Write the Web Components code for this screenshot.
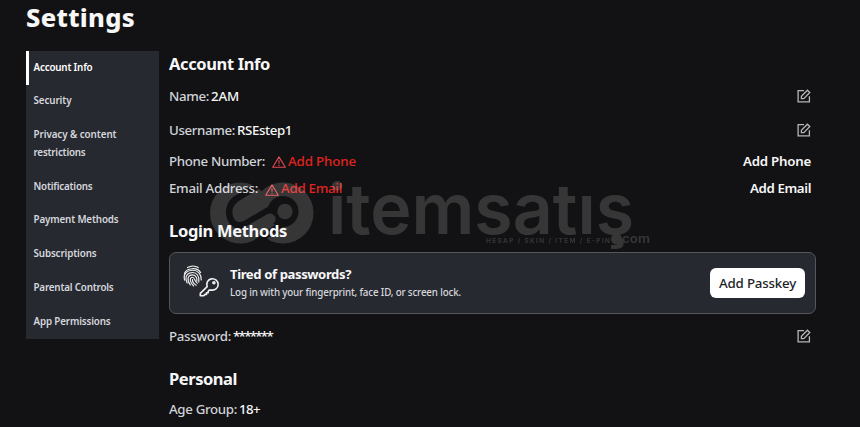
<!DOCTYPE html>
<html lang="en">
<head>
<meta charset="utf-8">
<title>Settings</title>
<style>
    body {
        margin: 0;
        height: 427px;
        overflow: hidden;
        background: #121214;
        color: #f7f7f8;
        font-family: "Noto Sans", "Open Sans", sans-serif;
    }
</style>
</head>
<body>
<settings-page></settings-page>

<script>
// Text that adjusts its letter spacing until it fills the given width
class FitText extends HTMLElement {
    constructor() {
        super();
        this.attachShadow({ mode: 'open' });
        this.shadowRoot.innerHTML = `<style>
            :host { display: block; white-space: nowrap; }
            span { display: inline-block; }
        </style><span><slot></slot></span>`;
    }

    connectedCallback() {
        const span = this.shadowRoot.querySelector('span');
        const width = Number(this.getAttribute('width'));
        const spacing = (width - span.getBoundingClientRect().width) / this.textContent.length;
        span.style.letterSpacing = spacing.toFixed(3) + 'px';
        this.style.width = width + 'px';
    }
}

class EditIcon extends HTMLElement {
    constructor() {
        super();
        this.attachShadow({ mode: 'open' });
        this.shadowRoot.innerHTML = `
            <style>
                :host { display: block; width: 14px; height: 14px; }
                svg { display: block; }
            </style>
            <svg width="14" height="14" viewBox="0 0 14 14" fill="none" stroke="#b4b5b8" stroke-width="1.3">
                <path d="M7 1.6H1.1V12.9H12.4V7.2"/>
                <path d="M4.4 9.6V7.3L10.4 1.2L12.8 3.5L6.8 9.6Z"/>
            </svg>
        `;
    }
}

class WarningIcon extends HTMLElement {
    constructor() {
        super();
        this.attachShadow({ mode: 'open' });
        this.shadowRoot.innerHTML = `
            <style>
                :host { display: block; width: 14px; height: 12px; }
                svg { display: block; }
            </style>
            <svg width="14" height="12" viewBox="0 0 14 12" fill="none" stroke="#e5484d" stroke-width="1.1">
                <path d="M7 .9L13.3 11.3H.7Z" stroke-linejoin="round"/>
                <path d="M7 4.2V7.8M7 8.8V10"/>
            </svg>
        `;
    }
}

class PasskeyIcon extends HTMLElement {
    constructor() {
        super();
        this.attachShadow({ mode: 'open' });
        this.shadowRoot.innerHTML = `
            <style>
                :host { display: block; width: 38px; height: 34px; }
                svg { display: block; }
            </style>
            <svg width="38" height="34" viewBox="0 0 38 34" fill="none" stroke="#f2f2f3" stroke-linecap="round">
                <g stroke-width="1.15">
                    <path d="M4.6 2.6C7.6 .7 12.2 .7 15.2 2.6"/>
                    <path d="M1.4 8.4C3.6 3.3 13.8 1.4 17.6 7.6"/>
                    <path d="M1.6 15.2C-.2 8.2 4.4 5.2 9.6 5.2C15 5.2 18.4 9 18.2 15"/>
                    <path d="M4.2 18C1 11.4 4.6 7.5 9.6 7.5C13.8 7.5 16.6 11 15.8 17"/>
                    <path d="M7.4 20C3.6 15.4 4.4 9.9 9.6 9.9C13.4 9.9 14.2 14 13.8 16.2"/>
                    <path d="M10.6 21C6.6 17.4 6.4 12.3 9.4 12.3C12.2 12.3 11 16.6 14.4 18.2"/>
                    <path d="M9.5 14.6C9.4 17.4 10.8 19.2 13.2 20.2"/>
                </g>
                <g stroke-width="1.6" stroke-linejoin="round">
                    <path d="M24.2 21.6A5.7 5.7 0 1 1 28.2 25L26.2 25.1L25.2 26.2V27.8H23.5V29.4H22L20.5 30.8H17.3V28.4Z"/>
                    <circle cx="30.9" cy="17.8" r="1"/>
                </g>
            </svg>
        `;
    }
}

class NavItem extends HTMLElement {
    constructor() {
        super();
        this.attachShadow({ mode: 'open' });
        this.shadowRoot.innerHTML = `
            <style>
                :host {
                    display: flex;
                    flex-direction: column;
                    align-items: flex-start;
                    padding: 7.6px 4px 8.4px 4.5px;
                    border-left: 3px solid transparent;
                    color: #d5d7dd;
                    font-size: 9.8px;
                    font-weight: 600;
                    line-height: 17.78px;
                }
                :host([active]) {
                    border-left-color: #ffffff;
                    color: #ffffff;
                }
            </style>
            <slot></slot>
        `;
    }
}

class SettingRow extends HTMLElement {
    constructor() {
        super();
        this.attachShadow({ mode: 'open' });
        this.shadowRoot.innerHTML = `
            <style>
                :host {
                    display: flex;
                    align-items: center;
                    height: 34px;
                    padding-right: 5px;
                    font-size: 13.3px;
                    font-weight: 550;
                }
                .label { color: #d0d2d8; }
                .value {
                    display: flex;
                    align-items: center;
                    flex: 1;
                    margin-left: 2px;
                }
                .action { font-weight: 600; }
            </style>
            <div class="label"><slot name="label"></slot></div>
            <div class="value"><slot></slot></div>
            <div class="action"><slot name="action"></slot></div>
        `;
    }
}

class PasskeyCard extends HTMLElement {
    constructor() {
        super();
        this.attachShadow({ mode: 'open' });
        this.shadowRoot.innerHTML = `
            <style>
                :host {
                    display: flex;
                    align-items: center;
                    box-sizing: border-box;
                    height: 62px;
                    padding: 0 10px 0 13px;
                    border: 1px solid #55565b;
                    border-radius: 7px;
                    background: #272930;
                }
                passkey-icon { margin-top: -2px; }
                .copy {
                    flex: 1;
                    display: flex;
                    flex-direction: column;
                    align-items: flex-start;
                    margin-left: 9px;
                }
                .title { font-size: 13.1px; font-weight: 700; line-height: 19px; }
                .text { font-size: 9.8px; font-weight: 500; line-height: 17px; color: #d5d7dd; }
                button {
                    display: flex;
                    justify-content: center;
                    width: 95px;
                    height: 30px;
                    padding: 0;
                    border: 0;
                    border-radius: 6px;
                    background: #ffffff;
                    color: #202227;
                    font: 550 13.3px/30px "Noto Sans", sans-serif;
                }
            </style>
            <passkey-icon></passkey-icon>
            <div class="copy">
                <fit-text class="title" width="121">Tired of passwords?</fit-text>
                <fit-text class="text" width="231">Log in with your fingerprint, face ID, or screen lock.</fit-text>
            </div>
            <button><fit-text width="77">Add Passkey</fit-text></button>
        `;
    }
}

// Translucent brand mark lying over the page
class BrandWatermark extends HTMLElement {
    constructor() {
        super();
        this.attachShadow({ mode: 'open' });
        this.shadowRoot.innerHTML = `
            <style>
                :host {
                    position: absolute;
                    left: 205px;
                    top: 175px;
                    opacity: 0.15;
                    pointer-events: none;
                }
                svg { display: block; }
                text { fill: #ffffff; }
            </style>
            <svg width="450" height="75" viewBox="205 175 450 75">
                <mask id="cut" maskUnits="userSpaceOnUse" x="205" y="175" width="120" height="75">
                    <g fill="#fff">
                        <circle cx="240.5" cy="213" r="30.5"/>
                        <circle cx="283" cy="213" r="30.5"/>
                    </g>
                    <g fill="none" stroke="#000" stroke-width="6.5">
                        <path d="M265 181L236 199C223 208 230 231 245 224L272 208"/>
                        <path d="M280 225L253 245"/>
                    </g>
                    <circle cx="283" cy="211.5" r="15.5"/>
                    <path d="M249 231L270 219" stroke="#fff" stroke-width="11" stroke-linecap="round"/>
                    <circle cx="285" cy="211.5" r="7.7" fill="#fff"/>
                </mask>
                <rect x="205" y="175" width="120" height="75" fill="#fff" mask="url(#cut)"/>
                <text x="328" y="233.5" font-family="Inter" font-size="70" font-weight="600" textLength="306" lengthAdjust="spacingAndGlyphs">itemsatış</text>
                <text x="486" y="242.5" font-family="Inter" font-size="6.5" font-weight="600" textLength="124">HESAP / SKIN / ITEM / E-PIN</text>
                <circle cx="616.5" cy="239" r="5.5" fill="#fff"/>
                <text x="622" y="243" font-family="Inter" font-size="12" font-weight="600" textLength="28" lengthAdjust="spacingAndGlyphs">com</text>
            </svg>
        `;
    }
}

class SettingsPage extends HTMLElement {
    constructor() {
        super();
        this.attachShadow({ mode: 'open' });
        this.shadowRoot.innerHTML = `
            <style>
                :host { display: block; position: relative; padding: 0 44px 0 26px; }
                h1 {
                    margin: 0;
                    height: 51px;
                    font-size: 25.5px;
                    font-weight: 800;
                    line-height: 34px;
                }
                .columns { display: flex; align-items: flex-start; gap: 10px; }
                nav { width: 133px; background: #272930; }
                main { flex: 1; }
                h2 {
                    margin: 0;
                    font-size: 16.5px;
                    font-weight: 700;
                    line-height: 26px;
                }
                h2.login { margin-top: 16px; }
                h2.personal { margin-top: 13px; }
                .first { margin-top: 2px; }
                .short { height: 27.5px; }
                passkey-card { margin: 8px 0 5px; }
                warning-icon { margin: 3px 2px 0 5px; }
                .error { color: #e0231f; }
            </style>
            <h1><fit-text width="109">Settings</fit-text></h1>
            <div class="columns">
                <nav>
                    <nav-item active><fit-text width="59">Account Info</fit-text></nav-item>
                    <nav-item><fit-text width="38">Security</fit-text></nav-item>
                    <nav-item>
                        <fit-text width="83">Privacy &amp; content</fit-text>
                        <fit-text width="52">restrictions</fit-text>
                    </nav-item>
                    <nav-item><fit-text width="59">Notifications</fit-text></nav-item>
                    <nav-item><fit-text width="85">Payment Methods</fit-text></nav-item>
                    <nav-item><fit-text width="63">Subscriptions</fit-text></nav-item>
                    <nav-item><fit-text width="80">Parental Controls</fit-text></nav-item>
                    <nav-item><fit-text width="77">App Permissions</fit-text></nav-item>
                </nav>
                <main>
                    <h2><fit-text width="101">Account Info</fit-text></h2>
                    <setting-row class="first">
                        <fit-text slot="label" width="40">Name:</fit-text>
                        <fit-text width="28">2AM</fit-text>
                        <edit-icon slot="action"></edit-icon>
                    </setting-row>
                    <setting-row>
                        <fit-text slot="label" width="66">Username:</fit-text>
                        <fit-text width="55">RSEstep1</fit-text>
                        <edit-icon slot="action"></edit-icon>
                    </setting-row>
                    <setting-row class="short">
                        <fit-text slot="label" width="96">Phone Number:</fit-text>
                        <warning-icon></warning-icon>
                        <fit-text class="error" width="68">Add Phone</fit-text>
                        <fit-text slot="action" width="68">Add Phone</fit-text>
                    </setting-row>
                    <setting-row class="short">
                        <fit-text slot="label" width="89">Email Address:</fit-text>
                        <warning-icon></warning-icon>
                        <fit-text class="error" width="61">Add Email</fit-text>
                        <fit-text slot="action" width="61">Add Email</fit-text>
                    </setting-row>
                    <h2 class="login"><fit-text width="118">Login Methods</fit-text></h2>
                    <passkey-card></passkey-card>
                    <setting-row>
                        <fit-text slot="label" width="62">Password:</fit-text>
                        <fit-text width="39">*******</fit-text>
                        <edit-icon slot="action"></edit-icon>
                    </setting-row>
                    <h2 class="personal"><fit-text width="68">Personal</fit-text></h2>
                    <setting-row>
                        <fit-text slot="label" width="68">Age Group:</fit-text>
                        <fit-text width="21">18+</fit-text>
                    </setting-row>
                </main>
            </div>
            <brand-watermark></brand-watermark>
        `;
    }
}

customElements.define('fit-text', FitText);
customElements.define('edit-icon', EditIcon);
customElements.define('warning-icon', WarningIcon);
customElements.define('passkey-icon', PasskeyIcon);
customElements.define('nav-item', NavItem);
customElements.define('setting-row', SettingRow);
customElements.define('passkey-card', PasskeyCard);
customElements.define('brand-watermark', BrandWatermark);
customElements.define('settings-page', SettingsPage);
</script>
</body>
</html>
